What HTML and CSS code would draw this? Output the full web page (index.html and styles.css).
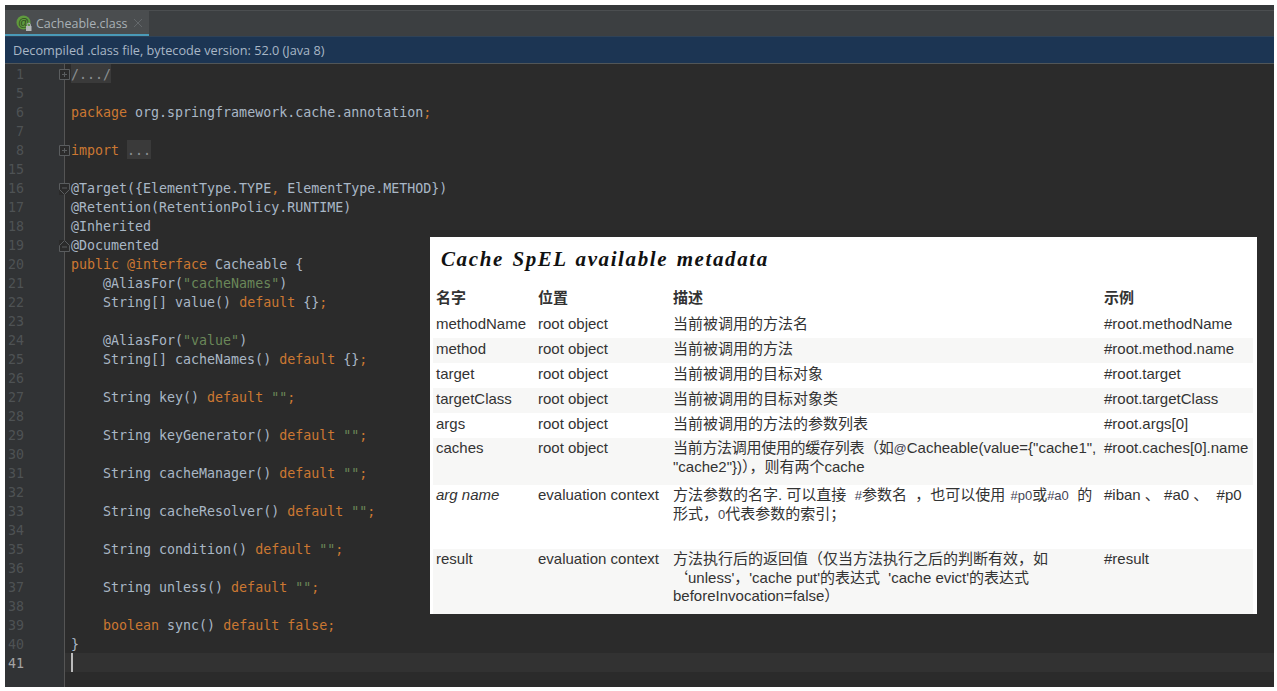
FILE: index.html
```html
<!DOCTYPE html>
<html lang="en">
<head>
  <meta charset="UTF-8">
  <title>Cacheable.class</title>
  <link rel="stylesheet" href="styles.css">
</head>
<body>
  <div class="ide">
    <div class="tabbar">
      <div class="tab">
        <svg class="tab-icon" width="18" height="18" viewBox="0 0 18 18">
          <circle cx="7.5" cy="7.5" r="7" fill="#5f9a3f"/>
          <text x="7.5" y="11" text-anchor="middle" class="tab-at">@</text>
          <rect x="10" y="11" width="5.5" height="5" fill="#b4b8ba"/>
          <path d="M11.2 11V9.8a1.6 1.6 0 0 1 3.2 0V11" fill="none" stroke="#b4b8ba"/>
        </svg>
        <span class="tab-name">Cacheable.class</span>
        <svg class="tab-close" width="10" height="10" viewBox="0 0 10 10"><path d="M1 1l8 8M9 1l-8 8" stroke="#63676a" fill="none"/></svg>
      </div>
    </div>
    <div class="banner">Decompiled .class file, bytecode version: 52.0 (Java 8)</div>
    <div class="editor">
      <div class="row"><span class="num">1</span><svg class="fold" width="11" height="11" viewBox="0 0 11 11"><path d="M.5.5h10v10H.5zM3 5.5h5M5.5 3v5"/></svg><code><span class="folded">/.../</span></code></div>
      <div class="row"><span class="num">5</span><code></code></div>
      <div class="row"><span class="num">6</span><code><span class="kw">package</span> org.springframework.cache.annotation<span class="kw">;</span></code></div>
      <div class="row"><span class="num">7</span><code></code></div>
      <div class="row"><span class="num">8</span><svg class="fold" width="11" height="11" viewBox="0 0 11 11"><path d="M.5.5h10v10H.5zM3 5.5h5M5.5 3v5"/></svg><code><span class="kw">import</span> <span class="folded">...</span></code></div>
      <div class="row"><span class="num">15</span><code></code></div>
      <div class="row"><span class="num">16</span><svg class="fold" width="11" height="12" viewBox="0 0 11 12"><path d="M.5.5h10v6l-5 5-5-5zM3 5h5"/></svg><code>@Target({ElementType.TYPE<span class="kw">,</span> ElementType.METHOD})</code></div>
      <div class="row"><span class="num">17</span><code>@Retention(RetentionPolicy.RUNTIME)</code></div>
      <div class="row"><span class="num">18</span><code>@Inherited</code></div>
      <div class="row"><span class="num">19</span><svg class="fold" width="11" height="12" viewBox="0 0 11 12"><path d="M.5 11.5h10v-6l-5-5-5 5zM3 7h5"/></svg><code>@Documented</code></div>
      <div class="row"><span class="num">20</span><code><span class="kw">public @interface</span> Cacheable {</code></div>
      <div class="row"><span class="num">21</span><code>    @AliasFor(<span class="str">"cacheNames"</span>)</code></div>
      <div class="row"><span class="num">22</span><code>    String[] value() <span class="kw">default</span> {}<span class="kw">;</span></code></div>
      <div class="row"><span class="num">23</span><code></code></div>
      <div class="row"><span class="num">24</span><code>    @AliasFor(<span class="str">"value"</span>)</code></div>
      <div class="row"><span class="num">25</span><code>    String[] cacheNames() <span class="kw">default</span> {}<span class="kw">;</span></code></div>
      <div class="row"><span class="num">26</span><code></code></div>
      <div class="row"><span class="num">27</span><code>    String key() <span class="kw">default</span> <span class="str">""</span><span class="kw">;</span></code></div>
      <div class="row"><span class="num">28</span><code></code></div>
      <div class="row"><span class="num">29</span><code>    String keyGenerator() <span class="kw">default</span> <span class="str">""</span><span class="kw">;</span></code></div>
      <div class="row"><span class="num">30</span><code></code></div>
      <div class="row"><span class="num">31</span><code>    String cacheManager() <span class="kw">default</span> <span class="str">""</span><span class="kw">;</span></code></div>
      <div class="row"><span class="num">32</span><code></code></div>
      <div class="row"><span class="num">33</span><code>    String cacheResolver() <span class="kw">default</span> <span class="str">""</span><span class="kw">;</span></code></div>
      <div class="row"><span class="num">34</span><code></code></div>
      <div class="row"><span class="num">35</span><code>    String condition() <span class="kw">default</span> <span class="str">""</span><span class="kw">;</span></code></div>
      <div class="row"><span class="num">36</span><code></code></div>
      <div class="row"><span class="num">37</span><code>    String unless() <span class="kw">default</span> <span class="str">""</span><span class="kw">;</span></code></div>
      <div class="row"><span class="num">38</span><code></code></div>
      <div class="row"><span class="num">39</span><code>    <span class="kw">boolean</span> sync() <span class="kw">default false;</span></code></div>
      <div class="row"><span class="num">40</span><code>}</code></div>
      <div class="row current"><span class="num">41</span><code><span class="caret"></span></code></div>
    </div>
    <div class="doc">
      <h2>Cache SpEL available metadata</h2>
      <table>
        <colgroup><col class="c-name"><col class="c-loc"><col class="c-desc"><col class="c-ex"></colgroup>
        <thead>
          <tr><th>名字</th><th>位置</th><th>描述</th><th>示例</th></tr>
        </thead>
        <tbody>
          <tr><td>methodName</td><td>root object</td><td>当前被调用的方法名</td><td>#root.methodName</td></tr>
          <tr><td>method</td><td>root object</td><td>当前被调用的方法</td><td>#root.method.name</td></tr>
          <tr><td>target</td><td>root object</td><td>当前被调用的目标对象</td><td>#root.target</td></tr>
          <tr><td>targetClass</td><td>root object</td><td>当前被调用的目标对象类</td><td>#root.targetClass</td></tr>
          <tr><td>args</td><td>root object</td><td>当前被调用的方法的参数列表</td><td>#root.args[0]</td></tr>
          <tr class="tall h-caches"><td>caches</td><td>root object</td><td><span class="tight">当前方法调用使用的缓存列表（如</span><span class="small">@</span>Cacheable(value={"cache1",<br>"cache2"})），则有两个cache</td><td>#root.caches[0].name</td></tr>
          <tr class="tall h-arg"><td><em>arg name</em></td><td>evaluation context</td><td>方法参数的名字. 可以直接 &nbsp;<span class="small">#</span>参数名 &nbsp;，也可以使用 <span class="small gap">#p0</span>或<span class="small">#a0</span> &nbsp;的<br>形式，<span class="small">0</span>代表参数的索引；</td><td>#iban 、 #a0 、 &nbsp;#p0</td></tr>
          <tr class="tall h-result"><td>result</td><td>evaluation context</td><td>方法执行后的返回值（仅当方法执行之后的判断有效，如<br><span class="cjk">‘</span>unless'，'cache put'的表达式 &nbsp;'cache evict'的表达式<br>beforeInvocation=false）</td><td>#result</td></tr>
        </tbody>
      </table>
    </div>
  </div>
</body>
</html>
```

FILE: styles.css
```css
html, body { margin: 0; padding: 0; background: #fff; }
body { height: 691px; overflow: hidden; }
.ide { position: relative; margin: 5px 3px 0 5px; height: 682px; background: #2b2b2b; display: flex; flex-direction: column; overflow: hidden; }

.tabbar { height: 31px; padding-top: 5px; background: #3c3f41; box-shadow: inset 0 5px 0 #35383a, inset 0 6px 0 #4b4e50; box-sizing: border-box; flex-shrink: 0; }
.tab { width: 144px; height: 26px; margin-top: 1px; box-sizing: border-box; padding: 1px 0 0 11px; background: #4a4d4f; border-bottom: 3px solid #4a9ab8; display: flex; align-items: center; font: 12.5px "Open Sans", "Liberation Sans", sans-serif; color: #a9b1b6; }
.tab-icon { flex-shrink: 0; margin-top: 2px; }
.tab-at { font: 11px "Liberation Sans", sans-serif; fill: #2e4a20; }
.tab-name { margin-left: 2px; }
.tab-close { margin-left: 5px; }

.banner { height: 28px; box-sizing: border-box; padding-left: 8px; background: #1c3553; border-top: 1px solid #2f4257; border-bottom: 1px solid #515658; font: 12.7px/26px "Open Sans", "Liberation Sans", sans-serif; color: #a9b7c6; flex-shrink: 0; }

.editor { flex: 1; position: relative; background: #2b2b2b; font: 13.3px/21px "DejaVu Sans Mono", monospace; color: #a9b7c6; }
.editor::before { content: ""; position: absolute; left: 0; top: 0; bottom: 0; width: 59px; background: #313335; border-right: 1px solid #555; }
.row { height: 19px; display: flex; position: relative; }
.num { width: 19px; margin-right: 47px; text-align: right; color: #4e5254; flex-shrink: 0; position: relative; }
.current .num { color: #a4a3a3; }
.row code { font: inherit; white-space: pre; flex: 1; height: 19px; }
.current code { background: #323232; margin-left: -6px; padding-left: 6px; }
.kw { color: #cc7832; }
.str { color: #6a8759; }
.folded { display: inline-block; height: 19px; vertical-align: top; background: #3a3a3a; color: #8a8f92; }
.caret { display: block; width: 2px; height: 19px; background: #bbb; }
.fold { position: absolute; left: 54px; top: 5px; background: #2b2b2b; fill: #2b2b2b; stroke: #5a5d5f; }

.doc { position: absolute; left: 425px; top: 232px; width: 827px; height: 377px; box-sizing: border-box; padding: 0 4px 0 3px; background: #fff; color: #333; font: 15px/18px "Liberation Sans", "Noto Sans CJK SC", sans-serif; }
.doc h2 { margin: 0; padding: 10px 0 0 8px; height: 51px; box-sizing: border-box; font: italic bold 21px/24px "Liberation Serif", "DejaVu Serif", serif; letter-spacing: 1.6px; word-spacing: 1.7px; color: #111; }
table { width: 820px; table-layout: fixed; border-collapse: collapse; }
.c-name { width: 102px; }
.c-loc { width: 135px; }
.c-desc { width: 431px; }
th { height: 25px; padding: 0 3px 5px; text-align: left; font-weight: bold; box-sizing: border-box; }
td { height: 25px; box-sizing: border-box; padding: 2px 3px 0; vertical-align: top; white-space: nowrap; }
tbody tr:nth-child(even) td { background: #f7f7f6; }
tr.tall td { padding-top: 1px; }
tr.h-caches td { height: 47px; }
tr.h-arg td { height: 64px; }
tr.h-result td { height: 65px; }
.small { font-size: 13px; color: #445; }
.gap { margin-left: 1px; }
.tight { letter-spacing: -0.3px; }
.cjk { font-family: "Noto Sans CJK SC", sans-serif; }
```
